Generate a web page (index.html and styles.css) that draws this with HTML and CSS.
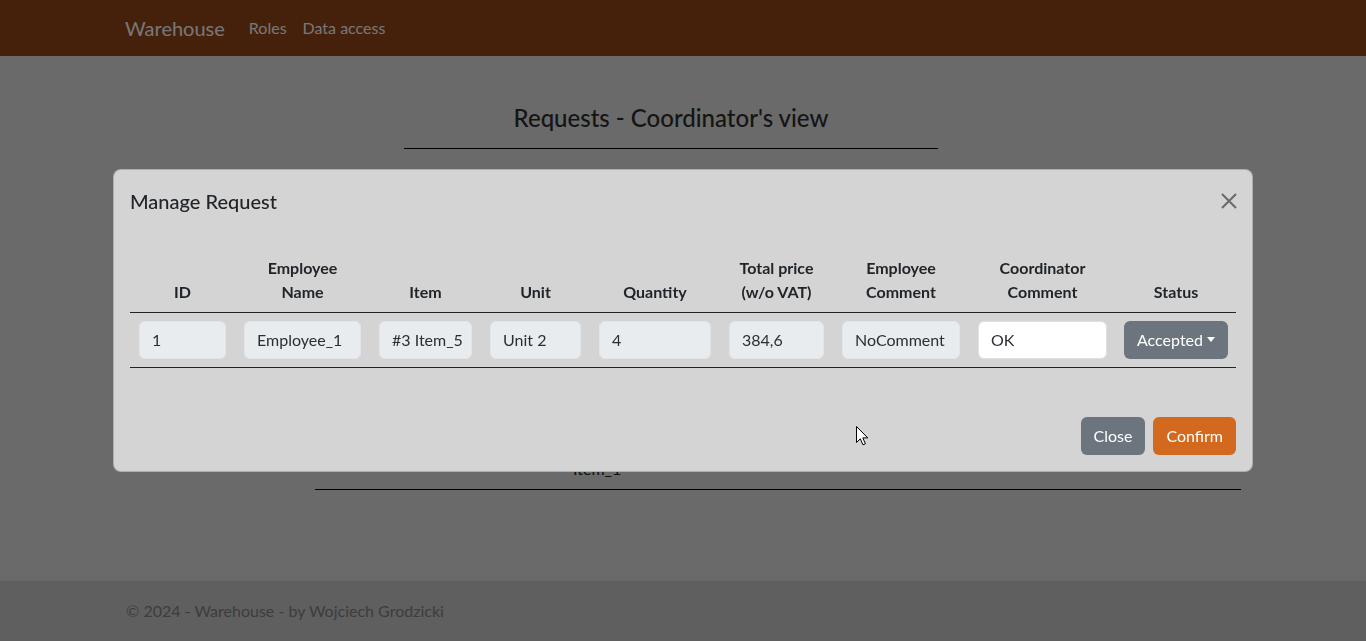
FILE: index.html
```html
<!DOCTYPE html>
<html lang="en">
<head>
<meta charset="utf-8">
<title>Requests - Warehouse</title>
<link rel="stylesheet" href="styles.css">
</head>
<body>
<header class="navbar">
  <div class="container nav-inner">
    <a class="brand" href="#">Warehouse</a>
    <nav class="nav-links">
      <a href="#">Roles</a>
      <a href="#">Data access</a>
    </nav>
  </div>
</header>

<main class="container page">
  <div class="title-block">
    <h4 class="page-title">Requests - Coordinator's view</h4>
    <hr class="title-rule">
  </div>
  <table class="req-table">
    <colgroup>
      <col class="rc-1"><col class="rc-2"><col class="rc-3"><col>
    </colgroup>
    <thead>
      <tr><th></th><th>Employee</th><th>Item</th><th>Status</th></tr>
    </thead>
    <tbody>
      <tr><td><button class="btn-sm btn-orange">Manage</button></td><td>Employee_1</td><td>#3<br>Item_5</td><td>Pending</td></tr>
      <tr><td><button class="btn-sm btn-orange">Manage</button></td><td>Employee_1</td><td>#2<br>Item_3</td><td>Pending</td></tr>
      <tr><td><button class="btn-sm btn-orange">Manage</button></td><td>Employee_2</td><td>#1<br>Item_2</td><td>Pending</td></tr>
      <tr><td><button class="btn-sm btn-orange">Manage</button></td><td>Employee_2</td><td>#1<br>Item_1</td><td>Pending</td></tr>
    </tbody>
  </table>
</main>

<footer class="footer">
  <div class="container">&copy; 2024 - Warehouse - by Wojciech Grodzicki</div>
</footer>

<div class="backdrop"></div>

<div class="modal-wrap">
  <div class="modal">
    <div class="modal-header">
      <h5 class="modal-title">Manage Request</h5>
      <button class="btn-close" aria-label="Close">
        <svg width="16" height="16" viewBox="0 0 16 16"><path d="M1 1L15 15M15 1L1 15" stroke="currentColor" stroke-width="2" fill="none"/></svg>
      </button>
    </div>
    <div class="modal-body">
      <table class="manage-table">
        <colgroup>
          <col class="c-id"><col class="c-emp"><col class="c-item"><col class="c-unit"><col class="c-qty">
          <col class="c-price"><col class="c-ecom"><col class="c-ccom"><col class="c-status">
        </colgroup>
        <thead>
          <tr>
            <th>ID</th>
            <th>Employee<br>Name</th>
            <th>Item</th>
            <th>Unit</th>
            <th>Quantity</th>
            <th>Total price<br>(w/o VAT)</th>
            <th>Employee<br>Comment</th>
            <th>Coordinator<br>Comment</th>
            <th>Status</th>
          </tr>
        </thead>
        <tbody>
          <tr>
            <td><input class="form-control" value="1" disabled></td>
            <td><input class="form-control" value="Employee_1" disabled></td>
            <td><input class="form-control" value="#3 Item_5" disabled></td>
            <td><input class="form-control" value="Unit 2" disabled></td>
            <td><input class="form-control" value="4" disabled></td>
            <td><input class="form-control" value="384,6" disabled></td>
            <td><input class="form-control" value="NoComment" disabled></td>
            <td><input class="form-control" value="OK"></td>
            <td class="status-cell"><button class="btn btn-secondary dropdown-toggle">Accepted</button></td>
          </tr>
        </tbody>
      </table>
    </div>
    <div class="modal-footer">
      <button class="btn btn-secondary">Close</button>
      <button class="btn btn-orange">Confirm</button>
    </div>
  </div>
</div>

<svg class="cursor" width="13" height="20" viewBox="0 0 13 20"><path d="M0.5 0.5 L0.5 16.5 L4.3 12.8 L7 18.8 L9.4 17.8 L6.8 11.9 L11.8 11.9 Z" fill="#fff" stroke="#000" stroke-width="1" stroke-linejoin="round"/></svg>
</body>
</html>
```

FILE: styles.css
```css
* { box-sizing: border-box; }

html, body { height: 100%; }

body {
  margin: 0;
  font-family: Lato, "Open Sans", sans-serif;
  font-size: 16px;
  line-height: 1.5;
  color: #212529;
  background: #d4d4d4;
  display: flex;
  flex-direction: column;
  min-height: 100vh;
}

.container {
  width: 1140px;
  margin: 0 auto;
  padding: 0 12px;
}

/* Navbar */
.navbar {
  background: #8a4114;
  height: 56px;
  flex: none;
}
.nav-inner {
  display: flex;
  align-items: center;
  height: 100%;
}
.brand {
  color: #eeeeee;
  font-size: 20px;
  text-decoration: none;
  margin-right: 16px;
  line-height: 30px;
}
.nav-links { display: flex; }
.nav-links a {
  color: #eeeeee;
  text-decoration: none;
  padding: 8px;
}

/* Page */
.page { flex: 1; }
.title-block {
  width: 534px;
  margin: 48px 0 0 279px;
  text-align: center;
}
.page-title {
  margin: 0;
  font-size: 24px;
  font-weight: 500;
  line-height: 1.2;
  color: #2a2a2a;
}
.title-rule {
  margin: 15px 0 0;
  border: 0;
  border-top: 1px solid #000;
}

.req-table {
  margin: 40px 0 0 190px;
  width: 926px;
  border-collapse: collapse;
  table-layout: fixed;
}
.rc-1 { width: 90px; }
.rc-2 { width: 160px; }
.rc-3 { width: 220px; }
.req-table th, .req-table td {
  padding: 8px;
  text-align: left;
  vertical-align: middle;
  border-bottom: 1px solid #000;
}
.btn-sm {
  font: inherit;
  font-size: 14px;
  line-height: 21px;
  padding: 4px 8px;
  border-radius: 4px;
  border: 1px solid transparent;
  color: #fff;
  margin-left: 2px;
}

/* Footer */
.footer {
  flex: none;
  height: 61px;
  border-top: 1px solid #cfcfcf;
  background: #bebebe;
  color: #7a7a7a;
  line-height: 60px;
}
.footer .container { padding-left: 13px; }

/* Backdrop & modal */
.backdrop {
  position: fixed;
  inset: 0;
  background: rgba(0, 0, 0, 0.5);
}
.modal-wrap {
  position: fixed;
  inset: 0;
  display: flex;
  align-items: center;
  justify-content: center;
}
.modal {
  width: 1140px;
  background: #d4d4d4;
  border: 1px solid rgba(0, 0, 0, 0.175);
  border-radius: 8px;
}
.modal-header {
  display: flex;
  align-items: center;
  justify-content: space-between;
  padding: 16px;
}
.modal-title {
  margin: 0;
  font-size: 20px;
  font-weight: 500;
  line-height: 30px;
}
.btn-close {
  border: 0;
  background: none;
  padding: 4px;
  margin-right: -5px;
  color: #6a6a6a;
  display: flex;
}
.modal-body { padding: 16px; }

.manage-table {
  width: 100%;
  table-layout: fixed;
  border-collapse: collapse;
  margin-bottom: 16px;
}
.c-id { width: 105px; }
.c-emp { width: 135px; }
.c-item { width: 111px; }
.c-unit { width: 109px; }
.c-qty { width: 130px; }
.c-price { width: 113px; }
.c-ecom { width: 136px; }
.c-ccom { width: 147px; }
.c-status { width: 120px; }

.manage-table th {
  padding: 8px 4px;
  font-weight: 700;
  text-align: center;
  vertical-align: bottom;
  border-bottom: 1px solid #212529;
}
.manage-table td {
  padding: 8px 9px;
  vertical-align: middle;
  border-bottom: 1px solid #212529;
}
.manage-table td.status-cell {
  padding: 8px;
  text-align: center;
}

.form-control {
  display: block;
  width: 100%;
  font: inherit;
  line-height: 24px;
  padding: 6px 2px 6px 12px;
  color: #2b2f33;
  background: #fff;
  border: 1px solid #dee2e6;
  border-radius: 6px;
}
.form-control:disabled {
  background: #e9ecef;
  border-color: #e2e5e9;
  color: #2b2f33;
}

.btn {
  font: inherit;
  line-height: 24px;
  padding: 6px 12px;
  border: 1px solid transparent;
  border-radius: 6px;
  color: #fff;
  white-space: nowrap;
}
.btn-secondary { background: #6c757d; }
.btn-orange { background: #d2691e; }
.status-cell .btn { width: 104px; padding: 6px 4px; }

.dropdown-toggle::after {
  content: "";
  display: inline-block;
  margin-left: 4px;
  vertical-align: 4px;
  border-top: 5px solid #fff;
  border-left: 4px solid transparent;
  border-right: 4px solid transparent;
}

.modal-footer {
  display: flex;
  justify-content: flex-end;
  padding: 13px 12px 12px;
}
.modal-footer .btn { margin: 4px; }

.cursor {
  position: fixed;
  left: 856px;
  top: 426px;
}
```
